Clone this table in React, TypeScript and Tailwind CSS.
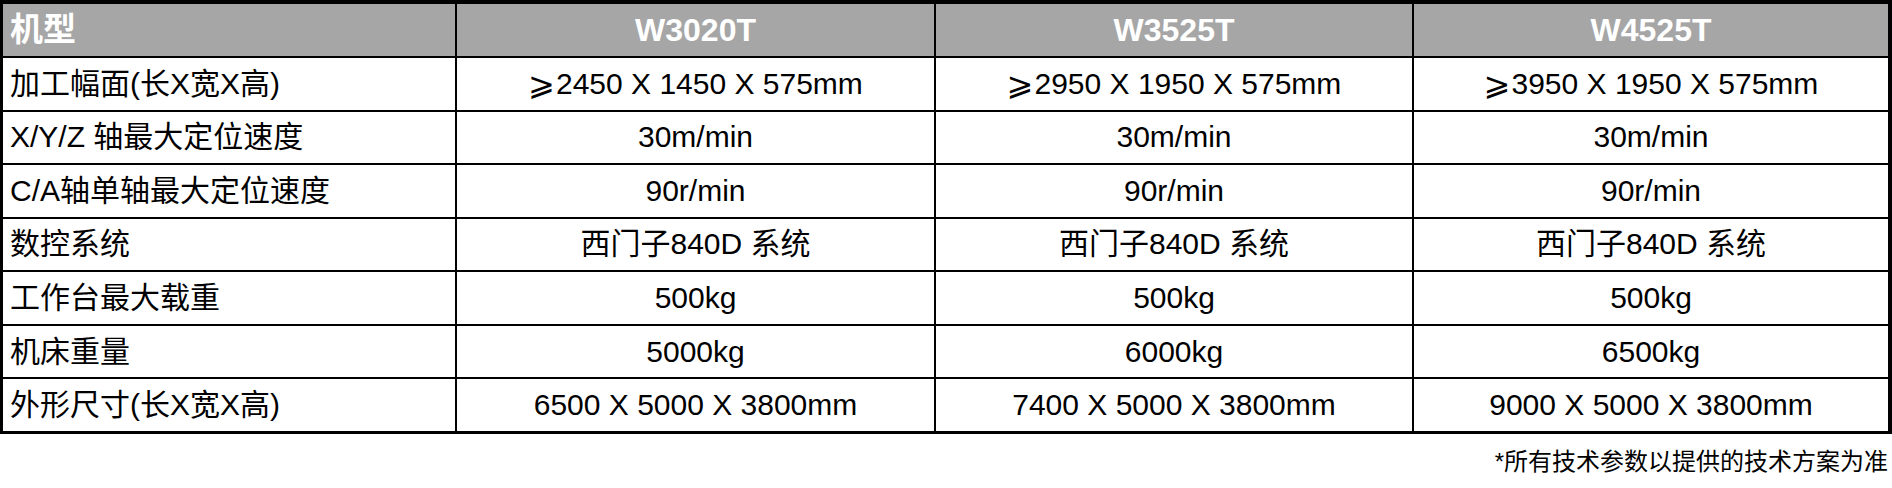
const models = ['W3020T', 'W3525T', 'W4525T'];

const rows: { label: string; values: string[] }[] = [
  {
    label: '加工幅面(长X宽X高)',
    values: ['2450 X 1450 X 575mm', '2950 X 1950 X 575mm', '3950 X 1950 X 575mm'],
  },
  { label: 'X/Y/Z 轴最大定位速度', values: ['30m/min', '30m/min', '30m/min'] },
  { label: 'C/A轴单轴最大定位速度', values: ['90r/min', '90r/min', '90r/min'] },
  { label: '数控系统', values: ['西门子840D 系统', '西门子840D 系统', '西门子840D 系统'] },
  { label: '工作台最大载重', values: ['500kg', '500kg', '500kg'] },
  { label: '机床重量', values: ['5000kg', '6000kg', '6500kg'] },
  {
    label: '外形尺寸(长X宽X高)',
    values: ['6500 X 5000 X 3800mm', '7400 X 5000 X 3800mm', '9000 X 5000 X 3800mm'],
  },
];

export default function App() {
  return (
    <div className="w-[1892px] h-[488px] bg-white font-['Liberation_Sans','Noto_Sans_CJK_SC',sans-serif] text-black">
      <div className="grid h-[434px] grid-cols-[452px_477px_476px_1fr] grid-rows-[52px_repeat(7,1fr)] gap-[2px] bg-black border-t-4 border-l-[3px] border-r-4 border-b-[3px] border-black">
        <div className="flex items-center bg-[#a6a6a6] pl-[7px] text-[33px] font-bold text-white">
          机型
        </div>
        {models.map((m) => (
          <div
            key={m}
            className="flex items-center justify-center bg-[#a6a6a6] text-[32px] font-bold text-white"
          >
            {m}
          </div>
        ))}
        {rows.map((row, r) => (
          <>
            <div key={row.label} className="flex items-center bg-white pl-[7px] text-[30px] leading-none">
              {row.label}
            </div>
            {row.values.map((v, i) => (
              <div
                key={row.label + i}
                className="flex items-center justify-center bg-white text-[30px] leading-none"
              >
                {r === 0 && <span className="mr-[1px] font-['DejaVu_Sans',sans-serif] text-[32px]">⩾</span>}
                {v}
              </div>
            ))}
          </>
        ))}
      </div>
      <div className="pt-[16px] pr-[4px] text-right text-[24px] leading-none">
        *所有技术参数以提供的技术方案为准
      </div>
    </div>
  );
}
